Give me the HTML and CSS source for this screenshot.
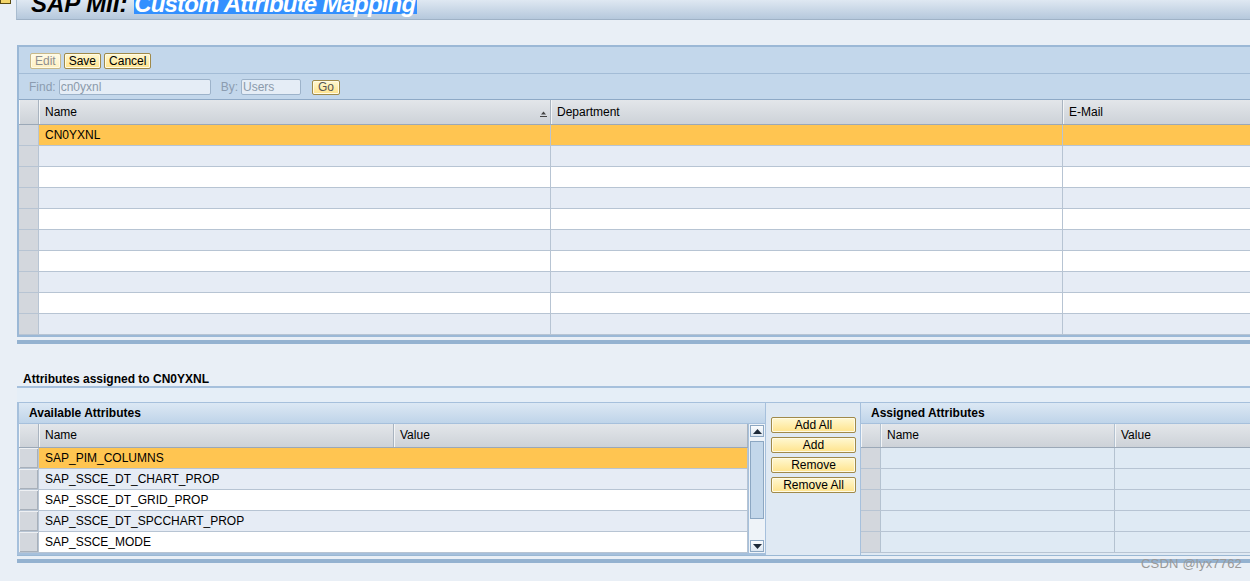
FILE: index.html
```html
<!DOCTYPE html>
<html>
<head>
<meta charset="utf-8">
<link rel="stylesheet" href="styles.css">
</head>
<body>
<div class="titlerow">
  <div class="corner"><span class="cornericon"></span></div>
  <div class="titlebar">
    <h1 class="title">SAP MII: <span class="sel">Custom Attribute Mapping</span></h1>
  </div>
</div>

<div class="panel top">
  <div class="toolbar">
    <button class="btn dis">Edit</button>
    <button class="btn">Save</button>
    <button class="btn">Cancel</button>
  </div>
  <div class="findbar">
    <span class="lbl">Find:</span>
    <span class="inp wide">cn0yxnl</span>
    <span class="lbl by">By:</span>
    <span class="inp narrow">Users</span>
    <button class="btn go">Go</button>
  </div>
  <div class="grid users">
    <div class="row head">
      <div class="cell sel-col"></div>
      <div class="cell">Name<svg class="sort" width="7" height="6" viewBox="0 0 7 6"><path d="M3.5 0.5 L6 3.5 H1 Z" fill="#444"/><rect x="0" y="5" width="7" height="1" fill="#444"/></svg></div>
      <div class="cell">Department</div>
      <div class="cell">E-Mail</div>
    </div>
    <div class="row on"><div class="cell sel-col"></div><div class="cell">CN0YXNL</div><div class="cell"></div><div class="cell"></div></div>
    <div class="row alt"><div class="cell sel-col"></div><div class="cell"></div><div class="cell"></div><div class="cell"></div></div>
    <div class="row"><div class="cell sel-col"></div><div class="cell"></div><div class="cell"></div><div class="cell"></div></div>
    <div class="row alt"><div class="cell sel-col"></div><div class="cell"></div><div class="cell"></div><div class="cell"></div></div>
    <div class="row"><div class="cell sel-col"></div><div class="cell"></div><div class="cell"></div><div class="cell"></div></div>
    <div class="row alt"><div class="cell sel-col"></div><div class="cell"></div><div class="cell"></div><div class="cell"></div></div>
    <div class="row"><div class="cell sel-col"></div><div class="cell"></div><div class="cell"></div><div class="cell"></div></div>
    <div class="row alt"><div class="cell sel-col"></div><div class="cell"></div><div class="cell"></div><div class="cell"></div></div>
    <div class="row"><div class="cell sel-col"></div><div class="cell"></div><div class="cell"></div><div class="cell"></div></div>
    <div class="row alt"><div class="cell sel-col"></div><div class="cell"></div><div class="cell"></div><div class="cell"></div></div>
  </div>
</div>
<div class="bar"></div>

<div class="assigned-label">Attributes assigned to CN0YXNL</div>

<div class="panel lower">
  <div class="strip"></div>
  <div class="cols">
    <div class="avail">
      <div class="phead">Available Attributes</div>
      <div class="tablewrap">
        <div class="grid attrs">
          <div class="row head"><div class="cell sel-col"></div><div class="cell">Name</div><div class="cell">Value</div></div>
          <div class="row on"><div class="cell sel-col btnlike"></div><div class="cell">SAP_PIM_COLUMNS</div><div class="cell"></div></div>
          <div class="row alt"><div class="cell sel-col btnlike"></div><div class="cell">SAP_SSCE_DT_CHART_PROP</div><div class="cell"></div></div>
          <div class="row"><div class="cell sel-col btnlike"></div><div class="cell">SAP_SSCE_DT_GRID_PROP</div><div class="cell"></div></div>
          <div class="row alt"><div class="cell sel-col btnlike"></div><div class="cell">SAP_SSCE_DT_SPCCHART_PROP</div><div class="cell"></div></div>
          <div class="row"><div class="cell sel-col btnlike"></div><div class="cell">SAP_SSCE_MODE</div><div class="cell"></div></div>
        </div>
        <div class="scroll">
          <div class="arrow"><svg width="9" height="5" viewBox="0 0 9 5"><path d="M4.5 0 L9 5 H0 Z" fill="#1e2a38"/></svg></div>
          <div class="thumb"></div>
          <div class="track"></div>
          <div class="arrow"><svg width="9" height="5" viewBox="0 0 9 5"><path d="M0 0 H9 L4.5 5 Z" fill="#1e2a38"/></svg></div>
        </div>
      </div>
    </div>
    <div class="mid">
      <button class="btn mbtn">Add All</button>
      <button class="btn mbtn">Add</button>
      <button class="btn mbtn">Remove</button>
      <button class="btn mbtn">Remove All</button>
    </div>
    <div class="assigned">
      <div class="phead">Assigned Attributes</div>
      <div class="grid asg">
        <div class="row head"><div class="cell sel-col"></div><div class="cell">Name</div><div class="cell">Value</div></div>
        <div class="row"><div class="cell sel-col"></div><div class="cell"></div><div class="cell"></div></div>
        <div class="row"><div class="cell sel-col"></div><div class="cell"></div><div class="cell"></div></div>
        <div class="row"><div class="cell sel-col"></div><div class="cell"></div><div class="cell"></div></div>
        <div class="row"><div class="cell sel-col"></div><div class="cell"></div><div class="cell"></div></div>
        <div class="row"><div class="cell sel-col"></div><div class="cell"></div><div class="cell"></div></div>
      </div>
    </div>
  </div>
</div>
<div class="bar bottom"></div>

<div class="watermark">CSDN @lyx7762</div>
</body>
</html>
```

FILE: styles.css
```css
html, body {
  margin: 0;
  padding: 0;
  overflow: hidden;
}
body {
  width: 1250px;
  height: 581px;
  background: #e9eff6;
  font-family: "Liberation Sans", Arial, sans-serif;
  font-size: 12px;
  color: #000;
  position: relative;
}

/* title */
.titlerow {
  display: flex;
  height: 20px;
}
.corner {
  width: 16px;
  position: relative;
}
.cornericon {
  display: block;
  width: 9px;
  height: 3px;
  background: #f3d56a;
  border: 1px solid #5a4a10;
  border-top: none;
}
.titlebar {
  flex: 1;
  height: 19px;
  overflow: hidden;
  background: linear-gradient(#dfe8f2, #b5c8dc);
  border-left: 1px solid #a9bccf;
  border-bottom: 1px solid #9fb2c6;
}
.title {
  margin: -6px 0 0 14px;
  font-size: 24px;
  line-height: 20px;
  font-weight: bold;
  font-style: italic;
  white-space: nowrap;
  color: #000;
}
.title .sel {
  display: inline-block;
  height: 20px;
  background: #3390ff;
  color: #fff;
  letter-spacing: -0.8px;
  padding-right: 2px;
}

/* panels */
.panel {
  margin-left: 17px;
  width: 1250px;
  box-sizing: border-box;
}
.panel.top {
  margin-top: 25px;
  border: 2px solid #9bb8d6;
  border-right: none;
}
.toolbar {
  height: 27px;
  box-sizing: border-box;
  background: #c3d7eb;
  border-bottom: 1px solid #a3bcd6;
  display: flex;
  align-items: flex-start;
  gap: 3px;
  padding: 6px 0 0 11px;
}
.btn {
  font-family: "Liberation Sans", Arial, sans-serif;
  font-size: 12px;
  height: 16px;
  line-height: 13px;
  padding: 0 4px;
  margin: 0;
  background: linear-gradient(#fff8d2, #ffe38c);
  border: 1px solid #a08a4a;
  border-radius: 2px;
  color: #000;
  box-shadow: inset 0 0 0 1px #fffbe6;
}
.btn.dis {
  background: linear-gradient(#fffbe8, #fff0c0);
  border-color: #c8b98a;
  color: #8f8f8f;
}
.findbar {
  height: 26px;
  box-sizing: border-box;
  background: #c3d7eb;
  border-bottom: 1px solid #8ea9c6;
  display: flex;
  align-items: flex-start;
  padding: 5px 0 0 10px;
}
.lbl {
  color: #8b9cb0;
  line-height: 16px;
  margin-right: 3px;
}
.lbl.by {
  margin-left: 10px;
}
.inp {
  height: 16px;
  box-sizing: border-box;
  line-height: 14px;
  border: 1px solid #9db3ca;
  border-radius: 2px;
  background: #e5edf6;
  color: #8b9aab;
  padding-left: 1px;
}
.inp.wide { width: 152px; }
.inp.narrow { width: 60px; }
.btn.go {
  margin-left: 11px;
  margin-top: 1px;
  height: 15px;
  width: 28px;
  padding: 0;
  color: #555;
}

/* grids */
.grid .row {
  display: grid;
  height: 21px;
  box-sizing: border-box;
  border-bottom: 1px solid #b7c4d3;
  background: #fff;
}
.grid .row.alt { background: #e6ecf5; }
.grid .row.on { background: #ffc551; }
.grid .row.head {
  height: 25px;
  background: linear-gradient(#e3e6ea, #cdd2d8);
  border-bottom: 1px solid #9ba8b7;
}
.users .row { grid-template-columns: 20px 512px 512px 1fr; }
.cell {
  box-sizing: border-box;
  border-right: 1px solid #b7c4d3;
  padding-left: 6px;
  line-height: 20px;
  white-space: nowrap;
  overflow: hidden;
  position: relative;
}
.head .cell {
  line-height: 24px;
  border-right: 1px solid #a9b4c0;
  box-shadow: inset 1px 0 #f3f5f7;
  color: #000;
}
.sel-col {
  background: #d3d7dd;
  padding: 0;
}
.head .sel-col { background: transparent; }
.sort {
  position: absolute;
  right: 3px;
  top: 11px;
}
.bar {
  height: 4px;
  background: #94b2d0;
  margin-top: 3px;
  margin-left: 17px;
}

.assigned-label {
  margin: 29px 0 0 23px;
  font-weight: bold;
  line-height: 12px;
  height: 12px;
}
.panel.lower {
  margin-top: 1px;
  border-top: 2px solid #a6c0dc;
  border-bottom: 1px solid #9ab8d4;
  background: #dfe9f3;
}
.strip {
  height: 14px;
  background: #e5eef7;
  border-bottom: 1px solid #a6c0dc;
}
.cols {
  display: flex;
}
.avail {
  width: 749px;
  box-sizing: border-box;
  border-left: 2px solid #a6c0dc;
  border-right: 1px solid #a6c0dc;
  border-bottom: 2px solid #a6c0dc;
}
.phead {
  height: 21px;
  box-sizing: border-box;
  background: linear-gradient(#dce8f4, #bfd4e9);
  border-bottom: 1px solid #a6c0dc;
  font-weight: bold;
  line-height: 20px;
  padding-left: 10px;
  color: #000;
}
.tablewrap {
  display: flex;
}
.attrs {
  width: 729px;
}
.attrs .row { grid-template-columns: 20px 355px 1fr; }
.attrs .row:not(.head) .cell:nth-child(2) { border-right-color: transparent; }
.attrs .row.head { height: 24px; }
.attrs .head .cell { line-height: 23px; }
.btnlike {
  box-shadow: inset 1px 1px #eef0f3, inset -1px -1px #a8b0ba;
  border-right: 1px solid #b7c4d3;
}
.scroll {
  width: 17px;
  background: #eef3f8;
  border-left: 1px solid #a6c0dc;
  display: flex;
  flex-direction: column;
  padding: 1px 1px 1px 1px;
  box-sizing: border-box;
}
.arrow {
  height: 12px;
  box-sizing: border-box;
  border: 1px solid #8ca7c2;
  background: linear-gradient(#fafcfe, #dde7f1);
  display: flex;
  align-items: center;
  justify-content: center;
}
.thumb {
  height: 78px;
  margin-top: 4px;
  box-sizing: border-box;
  background: #c3d7ea;
  border: 1px solid #8ca7c2;
}
.track { flex: 1; }

.mid {
  width: 94px;
  flex: none;
  display: flex;
  flex-direction: column;
  gap: 4px;
  padding: 14px 0 0 5px;
  box-sizing: border-box;
}
.mbtn {
  width: 85px;
  height: 16px;
}
.assigned {
  flex: 1;
  border-left: 1px solid #a6c0dc;
}
.asg .row { grid-template-columns: 20px 234px 1fr; background: #dfeaf4; }
.asg .row.head { height: 24px; }
.asg .head .cell { line-height: 23px; }
.asg .cell { border-right-color: #b4c2d0; }

.bar.bottom {
  margin-top: 3px;
}
.watermark {
  position: absolute;
  left: 1141px;
  top: 556px;
  font-size: 13px;
  color: #999;
  letter-spacing: 0.2px;
}
```
